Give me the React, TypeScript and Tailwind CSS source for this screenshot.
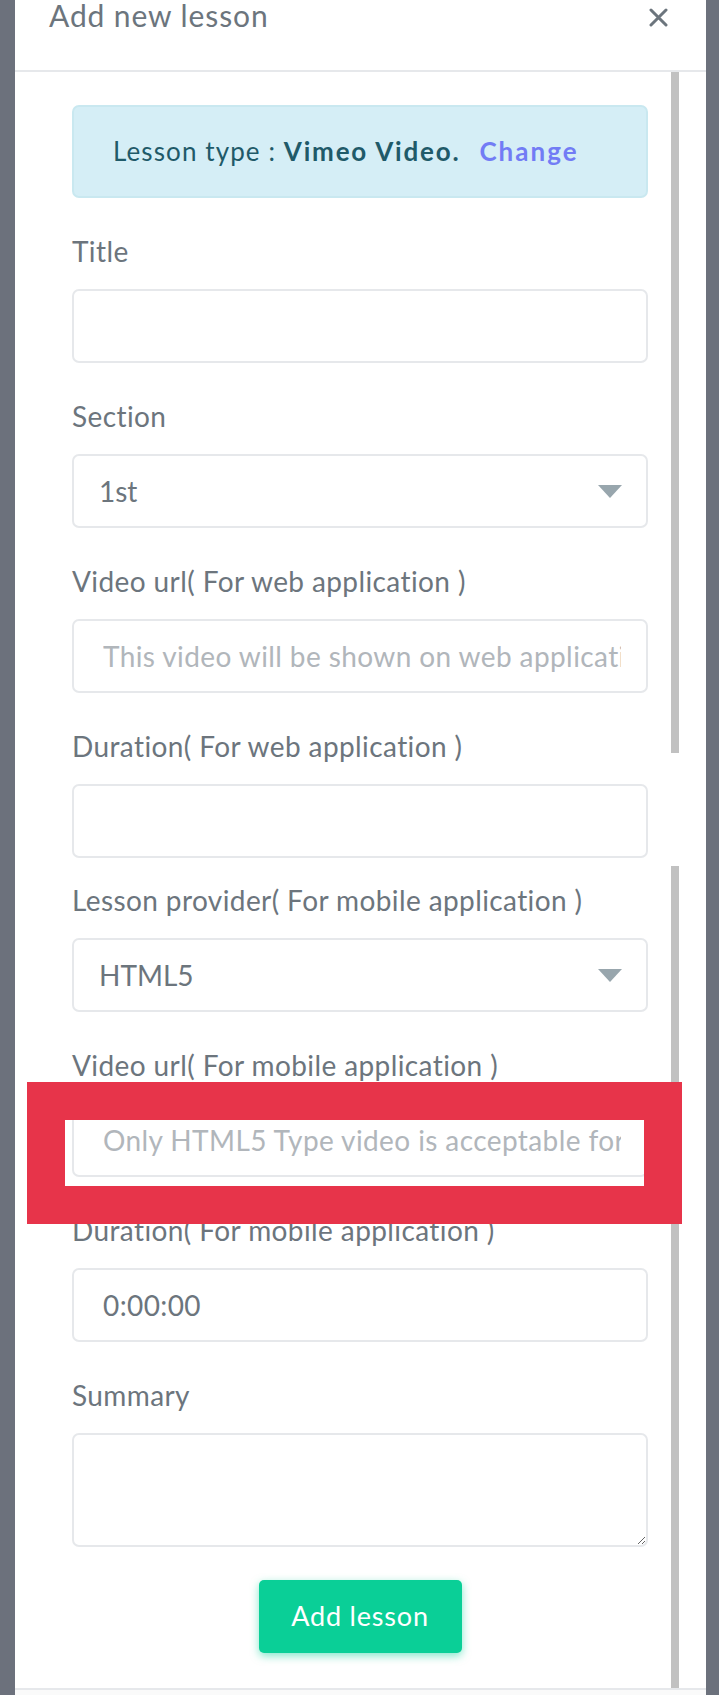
import React from "react";

const labelCls = "block text-[28px] leading-[30px] tracking-[0.4px] text-[#6c757d]";
const boxCls =
  "mt-[23px] flex h-[74px] w-full items-center rounded-[7px] border-2 border-[#e6e8eb] bg-white";

function Field({
  label,
  className = "mb-[38px]",
  children,
}: {
  label: string;
  className?: string;
  children: React.ReactNode;
}) {
  return (
    <div className={className}>
      <label className={labelCls}>{label}</label>
      {children}
    </div>
  );
}

function TextInput({ value, placeholder }: { value?: string; placeholder?: string }) {
  return (
    <input
      readOnly
      defaultValue={value}
      placeholder={placeholder}
      className={`${boxCls} pl-[29px] pr-[25px] text-[28px] tracking-[0.4px] text-[#6c757d] outline-none placeholder:text-[#b1b6bb]`}
    />
  );
}

function FakeSelect({ value }: { value: string }) {
  return (
    <div className={`${boxCls} justify-between pl-[25px] pr-[24px]`}>
      <span className="text-[28px] text-[#6c757d]">{value}</span>
      <svg width="24" height="13" viewBox="0 0 24 13">
        <path d="M0 0h24L12 13z" fill="#98a6ad" />
      </svg>
    </div>
  );
}

export default function App() {
  return (
    <div className="relative h-[1695px] w-[719px] overflow-hidden bg-[#6c717c] pl-[15px] pr-[13px] font-['Lato',sans-serif]">
      <div className="flex h-full flex-col bg-white">
        {/* header */}
        <div className="flex h-[72px] shrink-0 items-start justify-between border-b-2 border-[#e6e8eb] pl-[34px] pr-[38px]">
          <h4 className="-mt-[2px] text-[30px] leading-[34px] tracking-[0.9px] text-[#6c757d]">Add new lesson</h4>
          <svg className="mt-[8px]" width="19" height="19" viewBox="0 0 19 19">
            <path d="M2 2l15 15M17 2L2 17" stroke="#6c757d" strokeWidth="3" strokeLinecap="round" />
          </svg>
        </div>

        {/* body */}
        <div className="flex min-h-0 flex-1">
          <div className="ml-[57px] w-[576px] shrink-0 pt-[33px]">
            <div className="mb-[38px] flex h-[93px] items-center rounded-[7px] border-2 border-[#c9e8f0] bg-[#d5eef6] px-[39px] text-[26px] tracking-[1.1px] text-[#1f5a69]">
              <span>Lesson type :&nbsp;</span>
              <strong className="font-bold tracking-[1.8px]">Vimeo Video.</strong>
              <a className="ml-[19px] font-bold tracking-[2px] text-[#727cf5]">Change</a>
            </div>

            <Field label="Title">
              <TextInput />
            </Field>

            <Field label="Section">
              <FakeSelect value="1st" />
            </Field>

            <Field label="Video url( For web application )">
              <TextInput placeholder="This video will be shown on web application" />
            </Field>

            <Field label="Duration( For web application )" className="mb-[27px]">
              <TextInput />
            </Field>

            <Field label="Lesson provider( For mobile application )">
              <FakeSelect value="HTML5" />
            </Field>

            <Field label="Video url( For mobile application )">
              <TextInput placeholder="Only HTML5 Type video is acceptable for mobile application" />
            </Field>

            <Field label="Duration( For mobile application )">
              <TextInput value="0:00:00" />
            </Field>

            <div>
              <label className={labelCls}>Summary</label>
              <textarea className="mt-[23px] block h-[114px] w-full rounded-[7px] border-2 border-[#e6e8eb] bg-white outline-none" />
            </div>

            <div className="mt-[33px] flex justify-center">
              <button className="h-[73px] w-[203px] rounded-[5px] bg-[#0acf97] text-[27px] tracking-[0.8px] text-white shadow-[0_3px_8px_0_rgba(10,207,151,0.5)]">
                Add lesson
              </button>
            </div>
          </div>

          {/* scrollbar */}
          <div className="ml-[23px] flex w-[8px] flex-col">
            <div className="h-[681px] bg-[#c1c1c1]" />
            <div className="h-[113px]" />
            <div className="flex-1 bg-[#c1c1c1]" />
          </div>
        </div>

        <div className="h-[7px] shrink-0 border-t-2 border-[#e6e8eb] bg-[#fafafa]" />
      </div>

      {/* redaction overlay */}
      <div className="absolute left-[27px] top-[1082px] h-[142px] w-[655px] border-[38px] border-[#e7344a]" />
    </div>
  );
}
